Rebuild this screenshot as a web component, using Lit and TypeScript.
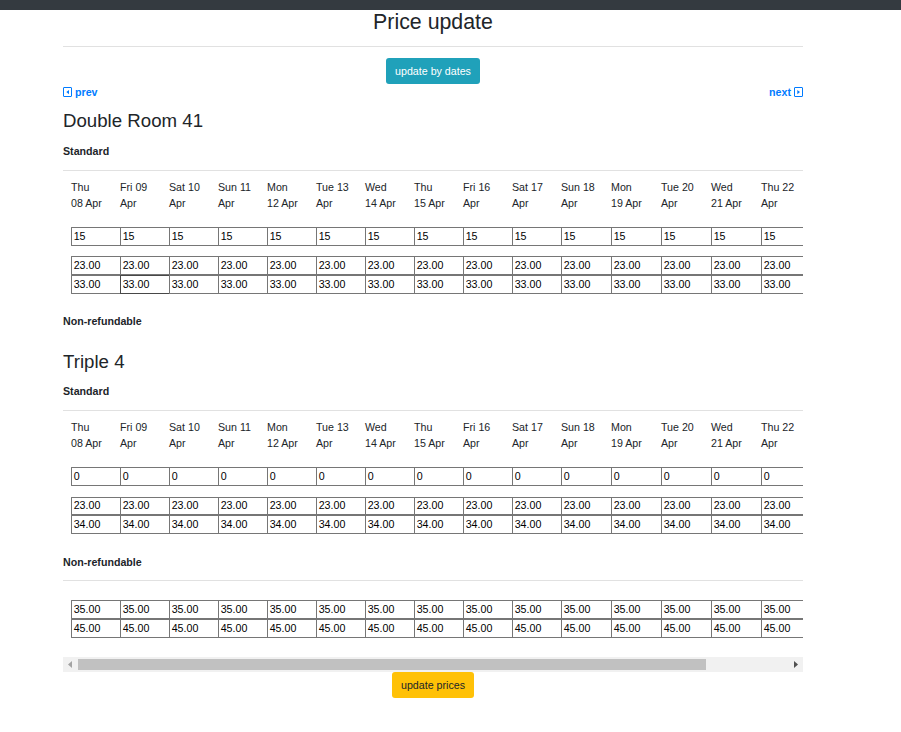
import { LitElement, html, css, svg } from "lit";
import { customElement, property } from "lit/decorators.js";

const DAYS: [string, string][] = [
  ["Thu", "08 Apr"], ["Fri 09", "Apr"], ["Sat 10", "Apr"], ["Sun 11", "Apr"], ["Mon", "12 Apr"],
  ["Tue 13", "Apr"], ["Wed", "14 Apr"], ["Thu", "15 Apr"], ["Fri 16", "Apr"], ["Sat 17", "Apr"],
  ["Sun 18", "Apr"], ["Mon", "19 Apr"], ["Tue 20", "Apr"], ["Wed", "21 Apr"], ["Thu 22", "Apr"],
];

@customElement("price-row")
class PriceRow extends LitElement {
  @property() value = "";
  @property({ type: Number }) active = -1;
  static styles = css`
    :host { display: block; padding-left: 8px; height: 19px; }
    .row { display: grid; grid-template-columns: repeat(10, 49px) repeat(4, 50px) 42px; height: 100%; }
    .cell {
      box-sizing: border-box; height: 100%; border: 1px solid #767676; border-right: 0;
      padding-left: 1.67px; font-size: 10.67px; line-height: 17px; color: #000; background: #fff;
    }
    :host([compact]) { height: 18px; }
    :host([compact]) .cell { line-height: 15px; }
    .cell:first-child { border-radius: 1px 0 0 1px; }
    .active { border-color: #484848; }
  `;
  render() {
    return html`<div class="row">
      ${DAYS.map((_, i) => html`<div class="cell ${i === this.active ? "active" : ""}">${this.value}</div>`)}
    </div>`;
  }
}

@customElement("day-header")
class DayHeader extends LitElement {
  static styles = css`
    :host { display: block; padding-left: 8px; }
    .row { display: grid; grid-template-columns: repeat(10, 49px) repeat(4, 50px) 42px; }
    .day { line-height: 16px; white-space: nowrap; }
  `;
  render() {
    return html`<div class="row">
      ${DAYS.map(([a, b]) => html`<div class="day">${a}<br />${b}</div>`)}
    </div>`;
  }
}

const caret = (d: string) => html`<svg class="icon" viewBox="0 0 9 10">
  ${svg`<rect x="0.5" y="0.5" width="8" height="9" rx="0.4" fill="none" stroke="currentColor"></rect><path d=${d} fill="currentColor"></path>`}
</svg>`;

@customElement("app-root")
class AppRoot extends LitElement {
  static styles = css`
    :host {
      display: block; height: 732px; overflow: hidden; background: #fff; color: #212529;
      font: 10.67px/16px "Liberation Sans", Arial, sans-serif;
    }
    .bar { height: 10px; background: #343a40; }
    .page { width: 740px; margin-left: 63px; display: flex; flex-direction: column; }
    h1 { margin: 0; font-size: 21.33px; font-weight: 400; line-height: 24px; height: 36px; text-align: center; }
    .rule { height: 1px; background: #e1e1e1; }
    .btn { align-self: center; box-sizing: border-box; height: 26px; line-height: 26px; border-radius: 3px; text-align: center; }
    .info { width: 94px; margin-top: 11px; background: #20a1ba; color: #fff; }
    .warn { width: 82px; background: #ffc107; }
    .nav { display: flex; justify-content: space-between; height: 16px; color: #007bff; font-weight: 700; }
    .link { display: flex; align-items: center; gap: 3px; }
    .icon { width: 9px; height: 10px; display: block; }
    h2 { margin: 0; font-size: 18.67px; font-weight: 400; line-height: 22px; height: 22px; }
    .plan { font-weight: 700; height: 16px; }
    .room { margin-top: 10px; }
    .room .plan { margin-top: 11px; }
    .room .rule { margin-top: 11px; }
    .room day-header { margin-top: 8px; }
    .stock { margin-top: 16px; }
    .first { margin-top: 10px; }
    .second { margin-top: 11px; }
    .room .last { margin-top: 19px; }
    .triple { margin-top: 22px; }
    .triple .plan { margin-top: 10px; }
    .triple .extra { margin-top: 20px; }
    .triple .extra + .rule { margin-top: 10px; }
    .scroll { margin-top: 19px; height: 15px; background: #f1f1f1; display: flex; align-items: center; }
    .arrow { width: 15px; height: 15px; display: block; flex: none; }
    .thumb { width: 628px; height: 11px; background: #c1c1c1; margin-right: auto; }
  `;
  render() {
    return html`
      <div class="bar"></div>
      <div class="page">
        <h1>Price update</h1>
        <div class="rule"></div>
        <div class="btn info">update by dates</div>
        <div class="nav">
          <div class="link prev">${caret("M6 2.9v4.4L3.3 5.1z")}<span>prev</span></div>
          <div class="link next"><span>next</span>${caret("M3.3 2.9v4.4L6 5.1z")}</div>
        </div>
        <section class="room">
          <h2>Double Room 41</h2>
          <div class="plan">Standard</div>
          <div class="rule"></div>
          <day-header></day-header>
          <price-row class="stock" value="15"></price-row>
          <price-row class="first" value="23.00"></price-row>
          <price-row value="33.00" active="1"></price-row>
          <div class="plan last">Non-refundable</div>
        </section>
        <section class="room triple">
          <h2>Triple 4</h2>
          <div class="plan">Standard</div>
          <div class="rule"></div>
          <day-header></day-header>
          <price-row class="stock" value="0"></price-row>
          <price-row class="second" value="23.00" compact></price-row>
          <price-row value="34.00"></price-row>
          <div class="plan extra">Non-refundable</div>
          <div class="rule"></div>
          <price-row class="last" value="35.00"></price-row>
          <price-row value="45.00"></price-row>
        </section>
        <div class="scroll">
          <svg class="arrow" viewBox="0 0 15 15"><path d="M9 4v7L5 7.5z" fill="#a3a3a3"></path></svg>
          <div class="thumb"></div>
          <svg class="arrow" viewBox="0 0 15 15"><path d="M6 4v7L10 7.5z" fill="#505050"></path></svg>
        </div>
        <div class="btn warn">update prices</div>
      </div>
    `;
  }
}
